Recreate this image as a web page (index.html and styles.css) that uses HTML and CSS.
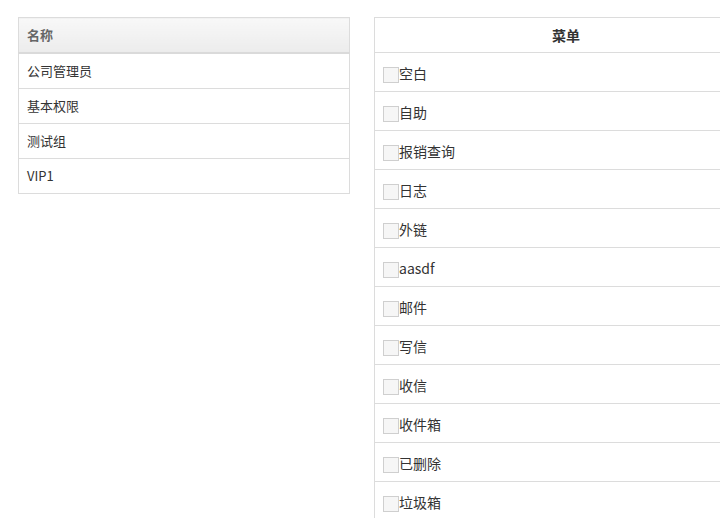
FILE: index.html
```html
<!DOCTYPE html>
<html lang="zh-CN">
<head>
<meta charset="utf-8">
<title>权限</title>
<link rel="stylesheet" href="styles.css">
</head>
<body>
<div class="page">
  <table class="grid groups">
    <thead>
      <tr><th>名称</th></tr>
    </thead>
    <tbody>
      <tr><td>公司管理员</td></tr>
      <tr><td>基本权限</td></tr>
      <tr><td>测试组</td></tr>
      <tr><td>VIP1</td></tr>
    </tbody>
  </table>
  <table class="grid menus">
    <thead>
      <tr><th>菜单</th></tr>
    </thead>
    <tbody>
      <tr><td><label class="item"><span class="box"></span>空白</label></td></tr>
      <tr><td><label class="item"><span class="box"></span>自助</label></td></tr>
      <tr><td><label class="item"><span class="box"></span>报销查询</label></td></tr>
      <tr><td><label class="item"><span class="box"></span>日志</label></td></tr>
      <tr><td><label class="item"><span class="box"></span>外链</label></td></tr>
      <tr><td><label class="item"><span class="box"></span>aasdf</label></td></tr>
      <tr><td><label class="item"><span class="box"></span>邮件</label></td></tr>
      <tr><td><label class="item"><span class="box"></span>写信</label></td></tr>
      <tr><td><label class="item"><span class="box"></span>收信</label></td></tr>
      <tr><td><label class="item"><span class="box"></span>收件箱</label></td></tr>
      <tr><td><label class="item"><span class="box"></span>已删除</label></td></tr>
      <tr><td><label class="item"><span class="box"></span>垃圾箱</label></td></tr>
    </tbody>
  </table>
</div>
</body>
</html>
```
FILE: styles.css
```css
html, body {
  margin: 0;
  padding: 0;
  overflow: hidden;
  background: #fff;
}
body {
  font-family: "Noto Sans CJK SC", "Noto Sans", "Liberation Sans", sans-serif;
  color: #333;
}
.page {
  display: flex;
  align-items: flex-start;
  gap: 24px;
  padding: 17px 0 0 18px;
  height: 518px;
  box-sizing: border-box;
  overflow: hidden;
}
.grid {
  border-collapse: collapse;
  border: 1px solid #dcdcdc;
  flex: none;
}
.grid td {
  border-top: 1px solid #dcdcdc;
  padding: 0 8px;
}
.groups {
  width: 332px;
}
.groups th {
  height: 34px;
  padding: 0 8px;
  text-align: left;
  font-size: 13px;
  font-weight: bold;
  color: #666;
  background: linear-gradient(#f8f8f8, #ececec);
  border-bottom: 2px solid #dadada;
  line-height: 34px;
}
.groups td {
  height: 34px;
  font-size: 13px;
  line-height: 34px;
  color: #333;
}
.groups tbody tr:first-child td {
  border-top: none;
}
.menus {
  width: 384px;
}
.menus th {
  height: 34px;
  padding: 0;
  text-align: center;
  font-size: 14px;
  font-weight: bold;
  color: #333;
  line-height: 34px;
  background: #fff;
}
.menus td {
  height: 38px;
  font-size: 14px;
  line-height: 38px;
  color: #333;
}
.item {
  display: flex;
  align-items: flex-start;
  padding-top: 11px;
  height: 27px;
  line-height: 18px;
}
.box {
  display: inline-block;
  width: 14px;
  height: 14px;
  border: 1px solid #cfcfcf;
  background: #f6f6f6;
  box-sizing: content-box;
  flex: none;
  margin-top: 3px;
}
```
